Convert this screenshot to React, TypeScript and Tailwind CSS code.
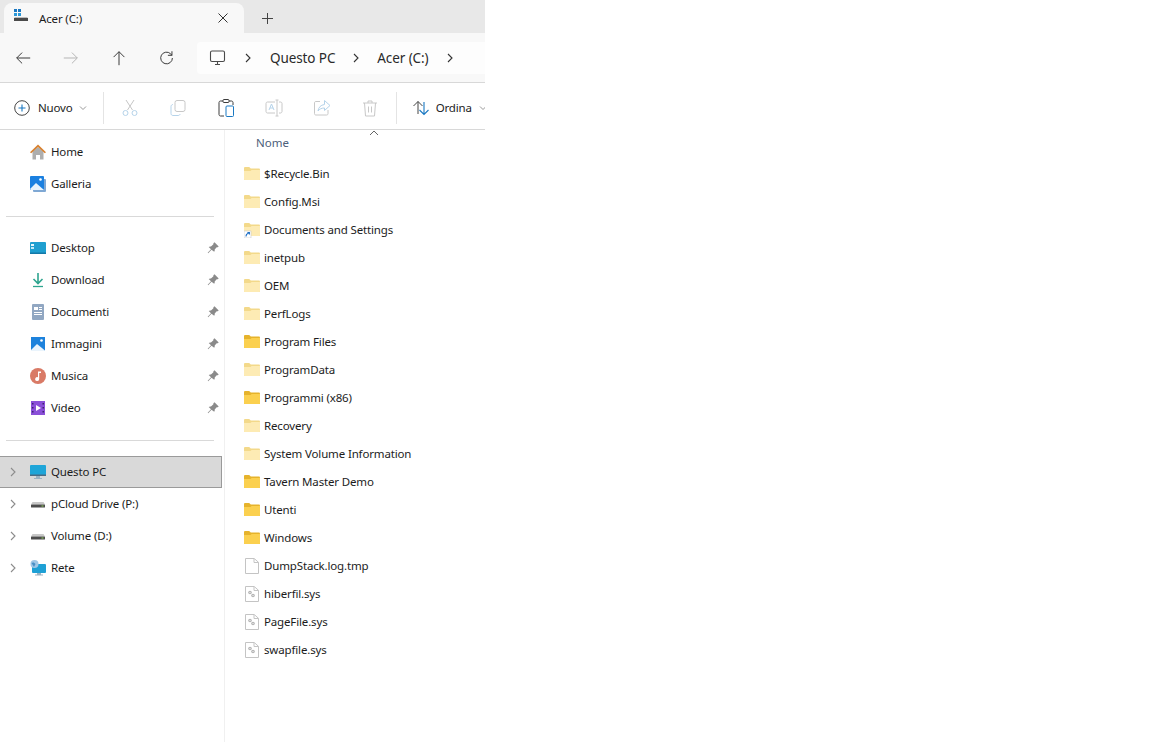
import { ReactNode } from "react";

const FONT = "font-['Noto_Sans','Open_Sans',sans-serif]";
const LABEL = "text-[11.5px] tracking-[-0.15px] text-[#1c1c1c]";

function Svg({ size = 20, children, className = "" }: { size?: number; children: ReactNode; className?: string }) {
  return (
    <svg width={size} height={size} viewBox="0 0 20 20" fill="none" className={className}>
      {children}
    </svg>
  );
}

function Folder({ pale = true, link = false }: { pale?: boolean; link?: boolean }) {
  const back = pale ? "#f3d98a" : "#e6b32c";
  const front = pale ? "#fdebb4" : "#fbd04f";
  return (
    <svg width="16" height="16" viewBox="0 0 16 16" className="shrink-0">
      <path d="M0 2.200C0 1.500.5 1 1.200 1h4l1.600 1.600h8c.7 0 1.200.5 1.200 1.200V13c0 .6-.5 1-1 1H1c-.6 0-1-.4-1-1z" fill={back} />
      <path d="M0 5h6.400L7.600 4H16v9c0 .6-.5 1-1 1H1c-.6 0-1-.4-1-1z" fill={front} />
      {link && (
        <g>
          <rect x="0" y="9" width="7" height="7" fill="#fff" stroke="#c9c9c9" strokeWidth=".6" />
          <path d="M2 14.500c0-2 1-3 2.600-3M3.400 10.600h2v2" stroke="#1f6fc4" strokeWidth="1.100" fill="none" />
        </g>
      )}
    </svg>
  );
}

function FileIcon({ system = false }: { system?: boolean }) {
  return (
    <svg width="16" height="16" viewBox="0 0 16 16" className="shrink-0">
      <path d="M1.500.5h8.700l4.300 3.800v11.200h-13z" fill="#fff" stroke="#c4c4c4" />
      <path d="M10 .8v3.700h4.300" fill="none" stroke="#c4c4c4" />
      {system && (
        <g fill="#b5b5b5">
          <circle cx="6" cy="6.500" r="1.800" />
          <circle cx="9" cy="9.500" r="1.800" />
          <circle cx="6" cy="6.500" r=".6" fill="#fff" />
          <circle cx="9" cy="9.500" r=".6" fill="#fff" />
        </g>
      )}
    </svg>
  );
}

function Chevron({ className = "" }: { className?: string }) {
  return (
    <svg width="10" height="10" viewBox="0 0 10 10" fill="none" className={className}>
      <path d="M3 1l4 4-4 4" stroke="currentColor" strokeWidth="1.100" />
    </svg>
  );
}

function Pin() {
  return (
    <svg width="12" height="12" viewBox="0 0 12 12" className="shrink-0">
      <path d="M7.500.3l4.200 4.200-1 .8-1 0-2 2.200c.2 1 0 1.800-.5 2.300L4.500 7.800 1.200 11.200l-.5-.4L4 7.300 1.700 5c.6-.6 1.400-.7 2.300-.5l2.400-2.200v-1z" fill="#8a8a8a" />
    </svg>
  );
}

function SideIcon({ name }: { name: string }) {
  if (name === "home")
    return (
      <svg width="16" height="16" viewBox="0 0 16 16">
        <path d="M2.500 7.500L8 3l5.500 4.500V15.500H10v-4.500H6v4.500H2.500z" fill="#aeaeae" />
        <path d="M0 8.200L8 .5l8 7.700-1.200 1L8 3 1.200 9.200z" fill="#d8812f" />
      </svg>
    );
  if (name === "gallery")
    return (
      <svg width="16" height="16" viewBox="0 0 16 16">
        <rect x="3" y="3" width="13" height="13" rx="1" fill="#7fa8d4" />
        <rect x="0" y="0" width="14" height="14" rx="1" fill="#1b80e0" />
        <path d="M0 13l6-6 8 7H1z" fill="#e8f3fc" />
        <circle cx="10.500" cy="3.500" r="1.300" fill="#fff" />
      </svg>
    );
  if (name === "desktop")
    return (
      <svg width="16" height="16" viewBox="0 0 16 16">
        <rect x="0" y="2" width="16" height="12" rx="1" fill="#1f9fd0" />
        <rect x="1" y="4" width="3" height="2" fill="#e4f6fc" />
        <rect x="1" y="7" width="3" height="2" fill="#bfe8f6" />
        <rect x="0" y="12.500" width="16" height="1.500" fill="#1479a8" />
      </svg>
    );
  if (name === "download")
    return (
      <svg width="16" height="16" viewBox="0 0 16 16" fill="none">
        <path d="M8 1v10M3.500 7L8 11.500 12.500 7" stroke="#2ea58f" strokeWidth="1.600" />
        <path d="M3 14.500h10" stroke="#2ea58f" strokeWidth="1.300" />
      </svg>
    );
  if (name === "docs")
    return (
      <svg width="16" height="16" viewBox="0 0 16 16">
        <rect x="2" y="0" width="12" height="16" rx="1" fill="#91a7c2" />
        <path d="M4 3h4v3H4zM9 3h3v1H9zM9 5h3v1H9zM4 8h8v1H4zM4 10h8v1H4z" fill="#fff" />
      </svg>
    );
  if (name === "images")
    return (
      <svg width="16" height="16" viewBox="0 0 16 16">
        <rect x="1" y="1" width="14" height="14" fill="#1d82dc" />
        <path d="M1 14l6-6 8 6.500V15H1z" fill="#eaf4fc" />
        <circle cx="11.500" cy="4.500" r="1.300" fill="#fff" />
      </svg>
    );
  if (name === "music")
    return (
      <svg width="16" height="16" viewBox="0 0 16 16">
        <circle cx="8" cy="8" r="8" fill="#d97a66" />
        <path d="M8 3.500h3v1.600H9.200V11a2 2 0 1 1-1.200-1.800z" fill="#fff" />
      </svg>
    );
  if (name === "video")
    return (
      <svg width="16" height="16" viewBox="0 0 16 16">
        <rect x="1" y="1" width="14" height="14" fill="#8a4fd8" />
        <path d="M6 5l5 3-5 3z" fill="#fff" />
        <path d="M2 3h1.500v1.500H2zM2 7h1.500v1.500H2zM2 11h1.500v1.500H2zM12.500 3H14v1.500h-1.500zM12.500 7H14v1.500h-1.500zM12.500 11H14v1.500h-1.500z" fill="#3d2270" />
      </svg>
    );
  if (name === "pc")
    return (
      <svg width="16" height="16" viewBox="0 0 16 16">
        <rect x="0" y="1" width="16" height="11" rx="1" fill="#1ea5d8" />
        <rect x="0" y="10.500" width="16" height="1.500" fill="#4a6d85" />
        <path d="M6 12h4v2h2v1H4v-1h2z" fill="#9bb2c2" />
      </svg>
    );
  if (name === "drive")
    return (
      <svg width="16" height="16" viewBox="0 0 16 16">
        <path d="M2.500 6h11L15 8.500H1z" fill="#c8c8c8" />
        <rect x="1" y="8.500" width="14" height="3" rx=".5" fill="#4d4d4d" />
        <rect x="11.500" y="9.500" width="2" height="1" fill="#8fd05a" />
      </svg>
    );
  return (
    <svg width="16" height="16" viewBox="0 0 16 16">
      <rect x="2" y="4" width="14" height="9" rx="1" fill="#1ea0d5" />
      <path d="M7 13h4v1.500h2v1H5v-1h2z" fill="#9bb2c2" />
      <circle cx="4.500" cy="4" r="4" fill="#9fc6e6" />
      <path d="M1.500 3c1.500-1 3-.5 4 1l-1.500 3z" fill="#4a8fc4" />
    </svg>
  );
}

function SideRow({ icon, label, pin, chevron, selected }: { icon: string; label: string; pin?: boolean; chevron?: boolean; selected?: boolean }) {
  return (
    <div className={`flex h-8 w-[222px] items-center ${selected ? "border border-l-0 border-[#9a9a9a] bg-[#d9d9d9]" : ""}`}>
      <div className="flex w-[30px] shrink-0 items-center justify-center pl-[1px] text-[#8c8c8c]">
        {chevron && <Chevron className="mr-[5px]" />}
      </div>
      <SideIcon name={icon} />
      <span className={`ml-[5px] flex-1 leading-none ${LABEL}`}>{label}</span>
      {pin && (
        <div className="mr-[3px] flex">
          <Pin />
        </div>
      )}
    </div>
  );
}

const files: { name: string; kind: "pale" | "solid" | "link" | "file" | "sys" }[] = [
  { name: "$Recycle.Bin", kind: "pale" },
  { name: "Config.Msi", kind: "pale" },
  { name: "Documents and Settings", kind: "link" },
  { name: "inetpub", kind: "pale" },
  { name: "OEM", kind: "pale" },
  { name: "PerfLogs", kind: "pale" },
  { name: "Program Files", kind: "solid" },
  { name: "ProgramData", kind: "pale" },
  { name: "Programmi (x86)", kind: "solid" },
  { name: "Recovery", kind: "pale" },
  { name: "System Volume Information", kind: "pale" },
  { name: "Tavern Master Demo", kind: "solid" },
  { name: "Utenti", kind: "solid" },
  { name: "Windows", kind: "solid" },
  { name: "DumpStack.log.tmp", kind: "file" },
  { name: "hiberfil.sys", kind: "sys" },
  { name: "PageFile.sys", kind: "sys" },
  { name: "swapfile.sys", kind: "sys" },
];

function FileRow({ name, kind }: { name: string; kind: string }) {
  return (
    <div className="flex h-7 items-center pl-[19px]">
      {kind === "file" || kind === "sys" ? (
        <FileIcon system={kind === "sys"} />
      ) : (
        <Folder pale={kind !== "solid"} link={kind === "link"} />
      )}
      <span className={`ml-[4px] whitespace-nowrap leading-none ${LABEL}`}>{name}</span>
    </div>
  );
}

function NavBar() {
  return (
    <div className="flex h-[50px] shrink-0 items-center border-b border-[#d8d8d8] bg-[#f8f8f8] pl-[14px]">
      <div className="flex items-center gap-[30px]">
        <Svg size={18}>
          <path d="M18 10H3M9 4l-6 6 6 6" stroke="#3a3a3a" strokeWidth="1.100" />
        </Svg>
        <Svg size={18}>
          <path d="M2 10h15M11 4l6 6-6 6" stroke="#b5b5b5" strokeWidth="1.100" />
        </Svg>
        <Svg size={18}>
          <path d="M10 18V3M4 9l6-6 6 6" stroke="#3a3a3a" strokeWidth="1.100" />
        </Svg>
        <Svg size={18}>
          <path d="M16 10a6.500 6.500 0 1 1-2-4.700L15.500 7M15.500 2.500V7H11" stroke="#3a3a3a" strokeWidth="1.100" />
        </Svg>
      </div>
      <div className="ml-[21px] flex h-8 flex-1 items-center rounded-l-[4px] bg-[#fdfdfd] pl-[12px] text-[13.5px] tracking-[-0.1px] text-[#2a2a2a]">
        <svg width="18" height="18" viewBox="0 0 18 18" fill="none">
          <rect x="1.500" y="2" width="14" height="10.500" rx="1.500" stroke="#4a4a4a" strokeWidth="1.100" />
          <path d="M6 15.500h5M8.500 12.500v3" stroke="#4a4a4a" strokeWidth="1.100" />
        </svg>
        <Chevron className="ml-[16px] text-[#333]" />
        <span className="ml-[17px] pt-[1px]">Questo PC</span>
        <Chevron className="ml-[16px] text-[#333]" />
        <span className="ml-[16px] pt-[1px]">Acer (C:)</span>
        <Chevron className="ml-[17px] text-[#333]" />
      </div>
    </div>
  );
}

function Toolbar() {
  return (
    <div className="flex h-[47px] shrink-0 items-center overflow-hidden border-b border-[#d8d8d8] bg-white pl-[14px] pt-[3px]">
      <svg width="16" height="16" viewBox="0 0 16 16" fill="none" className="shrink-0">
        <circle cx="8" cy="8" r="7.300" stroke="#444" strokeWidth="1" />
        <path d="M8 4.500v7M4.500 8h7" stroke="#1a78c2" strokeWidth="1.100" />
      </svg>
      <span className={`ml-[8px] w-[38px] ${LABEL}`}>Nuovo</span>
      <svg width="8" height="8" viewBox="0 0 8 8" fill="none" className="ml-[6px] shrink-0">
        <path d="M1 2.500l3 3 3-3" stroke="#999" />
      </svg>
      <div className="ml-[16px] h-[32px] w-px shrink-0 bg-[#e4e4e4]" />
      <div className="ml-[16px] flex shrink-0 items-center gap-[28px]">
        <Svg>
          <path d="M6 2l6.500 10M14 2L7.500 12" stroke="#c6c6c6" />
          <circle cx="5.500" cy="15" r="2.500" stroke="#b5d3ea" />
          <circle cx="14.500" cy="15" r="2.500" stroke="#b5d3ea" />
        </Svg>
        <Svg>
          <rect x="7" y="2.500" width="10" height="11" rx="2" stroke="#c8c8c8" />
          <path d="M5 6.500c-1 0-2 .8-2 2v7c0 1.200.8 2 2 2h5c1 0 2-.5 2-1.500" stroke="#b5d3ea" />
        </Svg>
        <Svg>
          <path d="M7 3H4.500C3.700 3 3 3.700 3 4.500v12c0 .8.700 1.500 1.500 1.500H8M13 3h2.500c.8 0 1.500.7 1.500 1.500V7" stroke="#3c3c3c" />
          <rect x="7" y="1.500" width="6" height="3" rx="1" stroke="#3c3c3c" />
          <rect x="10" y="8" width="7.500" height="10.500" rx="1" stroke="#1a78c2" />
        </Svg>
        <Svg>
          <path d="M11 4H3.500C2.700 4 2 4.700 2 5.500v8c0 .8.700 1.500 1.500 1.500H11M15 4h1.500c.8 0 1.500.7 1.500 1.500v8c0 .8-.7 1.500-1.500 1.500H15" stroke="#c8c8c8" />
          <path d="M13 2v16M11.500 2h3M11.500 18h3" stroke="#c8c8c8" />
          <path d="M5 12l2.500-6L10 12M6 10h3" stroke="#b5d3ea" />
        </Svg>
        <Svg>
          <path d="M8 3.500H4C2.900 3.500 2.500 4 2.500 5v10.500c0 1 .5 1.500 1.500 1.500h10.500c1 0 1.500-.5 1.500-1.500V12" stroke="#c8c8c8" />
          <path d="M12.500 2.500L18 7.500l-5.500 5V10c-3 0-5 1-6.500 3 .5-3.500 2.500-6 6.500-6.500z" stroke="#b5d3ea" />
        </Svg>
        <Svg>
          <path d="M3 5h14M8 5V3h4v2M4.500 5l1 13h9l1-13M8.500 8.500v6M11.500 8.500v6" stroke="#c8c8c8" />
        </Svg>
      </div>
      <div className="ml-[16px] h-[32px] w-px shrink-0 bg-[#e4e4e4]" />
      <svg width="18" height="18" viewBox="0 0 18 18" fill="none" className="ml-[15px] shrink-0">
        <path d="M6 15V2.500M1.500 7L6 2.500 10.500 7" stroke="#444" strokeWidth="1" />
        <path d="M12 3v12.500M7.500 11l4.500 4.500 4.500-4.500" stroke="#1a78c2" strokeWidth="1.100" />
      </svg>
      <span className={`ml-[6px] w-[38px] shrink-0 ${LABEL}`}>Ordina</span>
      <svg width="8" height="8" viewBox="0 0 8 8" fill="none" className="ml-[5px] shrink-0">
        <path d="M1 2.500l3 3 3-3" stroke="#999" />
      </svg>
    </div>
  );
}

export default function App() {
  return (
    <div className={`flex h-[742px] w-[1152px] overflow-hidden bg-white ${FONT}`}>
      <div className="flex w-[485px] flex-col">
        <div className="flex h-[33px] shrink-0 items-end bg-[#e8e8e8] pl-[4px]">
          <div className="flex h-[30px] w-[240px] items-center rounded-t-[8px] bg-[#f8f8f8] pl-[9px]">
            <svg width="16" height="16" viewBox="0 0 16 16" className="shrink-0 -translate-y-[2px]">
              <path d="M1 1h3v3H1zM5 1h3v3H5z" fill="#1a78c2" />
              <path d="M1 5h3v3H1zM5 5h3v3H5z" fill="#2a98d8" />
              <rect x="1" y="10" width="14" height="3" fill="#4a4a4a" />
              <path d="M2 9h12l1 1H1z" fill="#bdbdbd" />
            </svg>
            <span className={`ml-[10px] flex-1 pt-[1px] ${LABEL}`}>Acer (C:)</span>
            <svg width="10" height="10" viewBox="0 0 10 10" fill="none" className="mr-[16px]">
              <path d="M.5.500l9 9M9.500.500l-9 9" stroke="#333" />
            </svg>
          </div>
          <svg width="11" height="11" viewBox="0 0 11 11" fill="none" className="mb-[9px] ml-[18px]">
            <path d="M5.500 0v11M0 5.500h11" stroke="#444" />
          </svg>
        </div>
        <NavBar />
        <Toolbar />
        <div className="flex min-h-0 flex-1">
          <aside className="w-[225px] shrink-0 border-r border-[#f0f0f0] pt-[6px]">
            <SideRow icon="home" label="Home" />
            <SideRow icon="gallery" label="Galleria" />
            <div className="ml-[6px] mt-[16px] h-px w-[208px] bg-[#d9d9d9]" />
            <div className="mt-[15px]">
              <SideRow icon="desktop" label="Desktop" pin />
              <SideRow icon="download" label="Download" pin />
              <SideRow icon="docs" label="Documenti" pin />
              <SideRow icon="images" label="Immagini" pin />
              <SideRow icon="music" label="Musica" pin />
              <SideRow icon="video" label="Video" pin />
            </div>
            <div className="ml-[6px] mt-[16px] h-px w-[208px] bg-[#d9d9d9]" />
            <div className="mt-[15px]">
              <SideRow icon="pc" label="Questo PC" chevron selected />
              <SideRow icon="drive" label="pCloud Drive (P:)" chevron />
              <SideRow icon="drive" label="Volume (D:)" chevron />
              <SideRow icon="net" label="Rete" chevron />
            </div>
          </aside>
          <main className="relative min-w-0 flex-1">
            <svg width="10" height="6" viewBox="0 0 10 6" fill="none" className="absolute left-[144px] top-0">
              <path d="M1 5l4-4 4 4" stroke="#666" />
            </svg>
            <div className="flex h-[30px] items-start pl-[31px] pt-[7px] text-[11.5px] leading-[12px] text-[#4c607a]">Nome</div>
            <div>
              {files.map((f) => (
                <FileRow key={f.name} name={f.name} kind={f.kind} />
              ))}
            </div>
          </main>
        </div>
      </div>
    </div>
  );
}
